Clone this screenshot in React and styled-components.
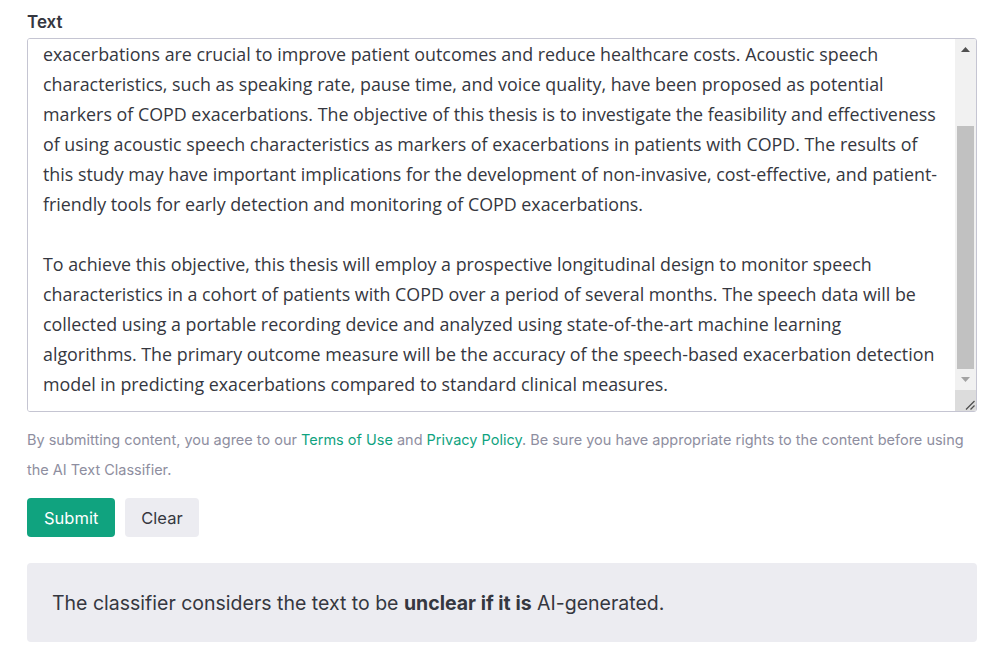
import React, { useLayoutEffect, useRef, useState } from 'react';
import styled, { createGlobalStyle } from 'styled-components';

const GlobalStyle = createGlobalStyle`
    html, body {
        margin: 0;
        padding: 0;
        background: #ffffff;
    }
    body {
        font-family: Inter, 'Noto Sans', sans-serif;
        color: #353740;
    }
`;

const Page = styled.div`
    padding: 8px 24px 0 27px;
    display: flex;
    flex-direction: column;
`;
const Label = styled.label`
    font-size: 17px;
    font-weight: 600;
    color: #353740;
    line-height: 28px;
    margin-bottom: 2px;
`;
const Field = styled.div`
    display: flex;
    box-sizing: border-box;
    width: 950px;
    height: 374px;
    border: 1px solid #c5c5d2;
    border-radius: 3px;
    overflow: hidden;
`;
const TextArea = styled.textarea`
    flex: 1;
    box-sizing: border-box;
    height: 100%;
    margin: 0;
    padding: 12px 16px 12px 15px;
    border: none;
    font-family: 'Open Sans', sans-serif;
    font-size: 17.85px;
    line-height: 30px;
    color: #353740;
    resize: none;
    outline: none;
    scrollbar-width: none;
    &::-webkit-scrollbar {
        display: none;
    }
`;
const ScrollBar = styled.div`
    display: flex;
    flex-direction: column;
    width: 21px;
    flex-shrink: 0;
    background-color: #f1f1f1;
`;
const ScrollButton = styled.div`
    height: 21px;
    display: flex;
    align-items: center;
    justify-content: center;
    color: ${(props) => (props.$disabled ? '#a3a3a3' : '#505050')};
`;
const Track = styled.div`
    flex: 1;
    display: flex;
    flex-direction: column;
`;
const Thumb = styled.div`
    margin-left: 2px;
    margin-right: 2px;
    background-color: #c1c1c1;
`;
const Corner = styled.div`
    height: 21px;
    display: flex;
    align-items: flex-end;
    justify-content: flex-end;
    background-color: #dcdcdc;
`;
const Notice = styled.p`
    margin: 13px 0 0 0;
    font-size: 14.5px;
    line-height: 30px;
    color: #8e8ea0;
`;
const Link = styled.a`
    color: #10a37f;
    text-decoration: none;
`;
const Actions = styled.div`
    display: flex;
    gap: 10px;
    margin-top: 13px;
`;
const Button = styled.button`
    font-family: Inter, sans-serif;
    font-size: 16.5px;
    height: 39px;
    padding: 0 ${(props) => (props.$primary ? '17px' : '16px')};
    border: none;
    border-radius: 4px;
    cursor: pointer;
    color: ${(props) => (props.$primary ? '#ffffff' : '#353740')};
    background-color: ${(props) => (props.$primary ? '#10a37f' : '#ececf1')};
`;
const Result = styled.div`
    margin-top: 26px;
    width: 950px;
    box-sizing: border-box;
    height: 79px;
    display: flex;
    align-items: center;
    padding: 0 25px;
    background-color: #ececf1;
    border-radius: 4px;
    font-size: 19.5px;
    color: #353740;
`;

const initialText = `Chronic obstructive pulmonary disease (COPD) is a progressive respiratory condition that affects millions of people worldwide. Acute exacerbations of COPD are associated with accelerated lung function decline, reduced quality of life, and increased risk of hospitalization. Early detection and timely treatment of exacerbations are crucial to improve patient outcomes and reduce healthcare costs. Acoustic speech characteristics, such as speaking rate, pause time, and voice quality, have been proposed as potential markers of COPD exacerbations. The objective of this thesis is to investigate the feasibility and effectiveness of using acoustic speech characteristics as markers of exacerbations in patients with COPD. The results of this study may have important implications for the development of non-invasive, cost-effective, and patient-friendly tools for early detection and monitoring of COPD exacerbations.

To achieve this objective, this thesis will employ a prospective longitudinal design to monitor speech characteristics in a cohort of patients with COPD over a period of several months. The speech data will be collected using a portable recording device and analyzed using state-of-the-art machine learning algorithms. The primary outcome measure will be the accuracy of the speech-based exacerbation detection model in predicting exacerbations compared to standard clinical measures.`;

const TRACK = 374 - 2 - 21 * 3;

function App() {
    const [text, setText] = useState(initialText);
    const [scroll, setScroll] = useState({ top: 0, height: 1, client: 1 });
    const areaRef = useRef(null);

    const measure = () => {
        const el = areaRef.current;
        if (el) setScroll({ top: el.scrollTop, height: el.scrollHeight, client: el.clientHeight });
    };

    useLayoutEffect(() => {
        if (areaRef.current) areaRef.current.scrollTop = areaRef.current.scrollHeight;
        measure();
    }, []);

    const thumbSize = Math.min(TRACK, (TRACK * scroll.client) / scroll.height);
    const range = scroll.height - scroll.client;
    const thumbOffset = range > 0 ? ((TRACK - thumbSize) * scroll.top) / range : 0;

    return (
        <>
            <GlobalStyle />
            <Page>
                <Label htmlFor="text">Text</Label>
                <Field>
                    <TextArea
                        id="text"
                        ref={areaRef}
                        value={text}
                        onScroll={measure}
                        onChange={(e) => {
                            setText(e.target.value);
                            measure();
                        }}
                    />
                    <ScrollBar>
                        <ScrollButton>
                            <svg width="9" height="5" viewBox="0 0 9 5">
                                <path d="M0 5 L4.5 0 L9 5 Z" fill="currentColor" />
                            </svg>
                        </ScrollButton>
                        <Track>
                            <Thumb style={{ marginTop: thumbOffset, height: thumbSize }} />
                        </Track>
                        <ScrollButton $disabled={range - scroll.top < 1}>
                            <svg width="9" height="5" viewBox="0 0 9 5">
                                <path d="M0 0 L9 0 L4.5 5 Z" fill="currentColor" />
                            </svg>
                        </ScrollButton>
                        <Corner>
                            <svg width="14" height="14" viewBox="0 0 14 14">
                                <path d="M12.5 4 L4 12.5 M12.5 8.5 L8.5 12.5" stroke="#505050" strokeWidth="1.3" />
                            </svg>
                        </Corner>
                    </ScrollBar>
                </Field>
                <Notice>
                    By submitting content, you agree to our <Link href="#">Terms of Use</Link> and{' '}
                    <Link href="#">Privacy Policy</Link>. Be sure you have appropriate rights to the content before
                    using the AI Text Classifier.
                </Notice>
                <Actions>
                    <Button $primary>Submit</Button>
                    <Button onClick={() => setText('')}>Clear</Button>
                </Actions>
                <Result>
                    <span>
                        The classifier considers the text to be <strong>unclear if it is</strong> AI-generated.
                    </span>
                </Result>
            </Page>
        </>
    );
}

export default App;
